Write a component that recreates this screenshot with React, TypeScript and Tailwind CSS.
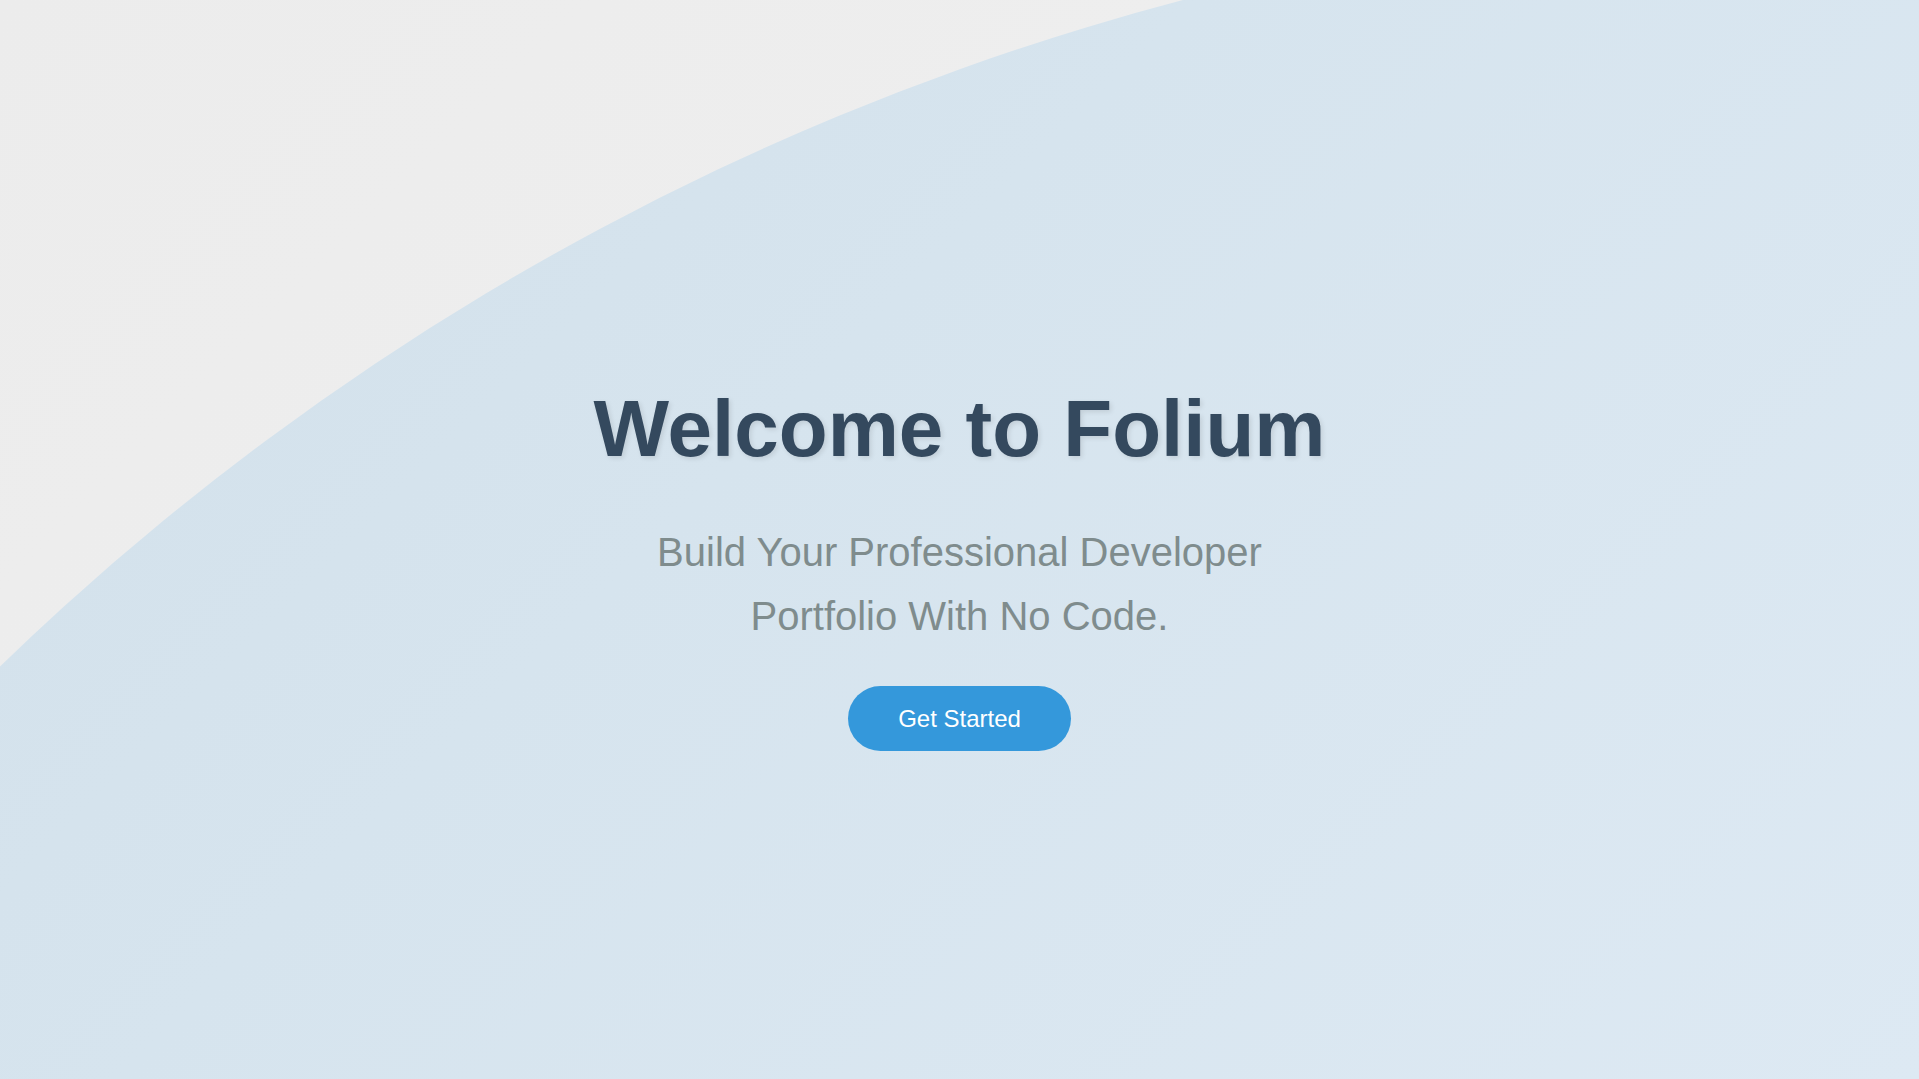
import React from 'react';

const App: React.FC = () => {
  return (
    <div className="relative h-screen w-full overflow-hidden bg-[linear-gradient(135deg,#ececec_0%,#f1f1f1_100%)] bg-fixed font-['Liberation_Sans',Arial,sans-serif]">
      {/* Decorative arc */}
      <div className="pointer-events-none absolute left-[-816px] top-[-88px] h-[5360px] w-[5360px] rounded-full bg-[linear-gradient(135deg,#d2e0ea_0%,#d6e4ee_40%,#dde9f3_100%)] bg-fixed" />

      {/* Hero */}
      <div className="relative flex h-full flex-col items-center justify-center pt-[54px] text-center">
        <h1 className="text-[80px] font-bold leading-[92px] text-[#34495e] [text-shadow:2px_2px_5px_rgba(0,0,0,0.1)]">
          Welcome to Folium
        </h1>
        <p className="mt-[45px] max-w-2xl text-[40px] leading-[64px] text-[#7f8c8d]">
          Build Your Professional Developer Portfolio With No Code.
        </p>
        <button className="mt-[38px] rounded-full bg-[#3498db] px-[50px] py-[18px] text-[24px] leading-[29px] text-white">
          Get Started
        </button>
      </div>
    </div>
  );
};

export default App;
